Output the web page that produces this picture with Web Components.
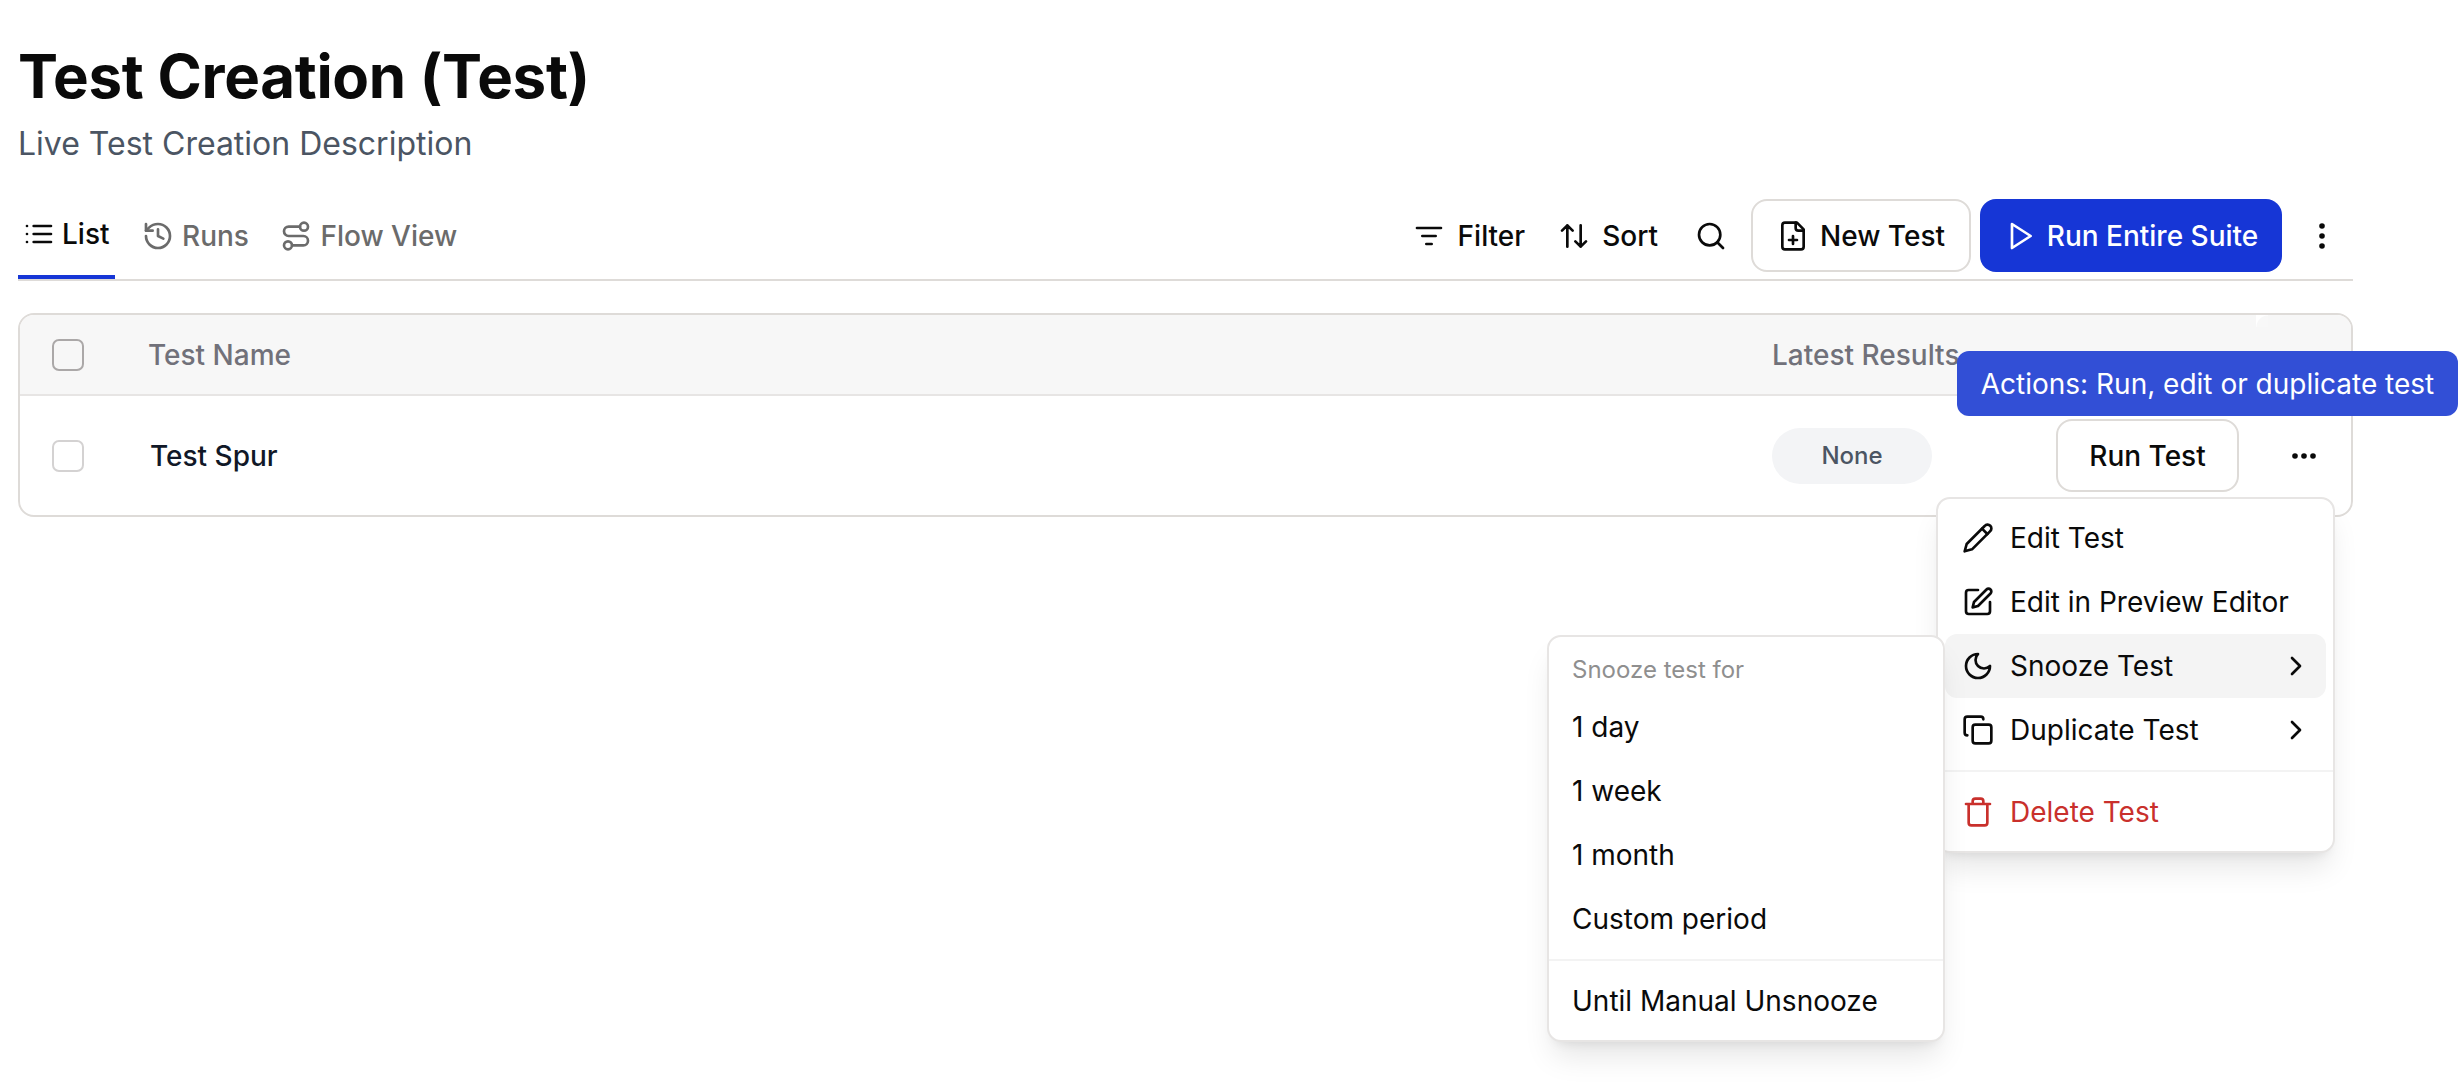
<!DOCTYPE html>
<html>
<head>
<meta charset="utf-8">
<style>
  html, body { margin: 0; padding: 0; background: #fff; overflow: hidden; }
  body { font-family: Inter, "Liberation Sans", sans-serif; color: #0a0a0a; height: 1082px; position: relative; }
</style>
</head>
<body>
<test-page></test-page>

<script>
const ICONS = {
  list: '<path d="M8 6h13M8 12h13M8 18h13M3 6h.01M3 12h.01M3 18h.01"/>',
  history: '<path d="M3 12a9 9 0 1 0 9-9 9.75 9.75 0 0 0-6.74 2.74L3 8"/><path d="M3 3v5h5"/><path d="M12 7v5l4 2"/>',
  route: '<circle cx="6" cy="19" r="3"/><path d="M9 19h8.5a3.5 3.5 0 0 0 0-7h-11a3.5 3.5 0 0 1 0-7H15"/><circle cx="18" cy="5" r="3"/>',
  filter: '<path d="M3 6h18M7 12h10M10 18h4"/>',
  sort: '<path d="m21 16-4 4-4-4M17 20V4M3 8l4-4 4 4M7 4v16"/>',
  search: '<circle cx="11" cy="11" r="8"/><path d="m21 21-4.3-4.3"/>',
  filePlus: '<path d="M15 2H6a2 2 0 0 0-2 2v16a2 2 0 0 0 2 2h12a2 2 0 0 0 2-2V7Z"/><path d="M14 2v4a2 2 0 0 0 2 2h4"/><path d="M9 15h6M12 18v-6"/>',
  play: '<polygon points="6 3 20 12 6 21 6 3"/>',
  pencil: '<path d="M17 3a2.85 2.83 0 1 1 4 4L7.5 20.5 2 22l1.5-5.5Z"/><path d="m15 5 4 4"/>',
  square: '<path d="M12 3H5a2 2 0 0 0-2 2v14a2 2 0 0 0 2 2h14a2 2 0 0 0 2-2v-7"/><path d="M18.375 2.625a2.121 2.121 0 1 1 3 3L12 15l-4 1 1-4Z"/>',
  moon: '<path d="M12 3a6 6 0 0 0 9 9 9 9 0 1 1-9-9Z"/>',
  copy: '<rect x="8" y="8" width="14" height="14" rx="2"/><path d="M4 16c-1.1 0-2-.9-2-2V4c0-1.1.9-2 2-2h10c1.1 0 2 .9 2 2"/>',
  chevron: '<path d="m9 18 6-6-6-6"/>',
  trash: '<path d="M3 6h18M19 6v14a2 2 0 0 1-2 2H7a2 2 0 0 1-2-2V6M8 6V4a2 2 0 0 1 2-2h4a2 2 0 0 1 2 2v2"/>'
};

class UiIcon extends HTMLElement {
  connectedCallback() {
    const size = this.getAttribute('size') || 32;
    const stroke = this.getAttribute('stroke') || 2;
    const root = this.attachShadow({mode: 'open'});
    root.innerHTML = `
      <style>:host { display: inline-flex; flex: none; } svg { display: block; }</style>
      <svg width="${size}" height="${size}" viewBox="0 0 24 24" fill="none" stroke="currentColor" stroke-width="${stroke}" stroke-linecap="round" stroke-linejoin="round">${ICONS[this.getAttribute('name')]}</svg>`;
  }
}
customElements.define('ui-icon', UiIcon);

class TabItem extends HTMLElement {
  constructor() {
    super();
    this.attachShadow({mode: 'open'}).innerHTML = `
      <style>
        :host { display: flex; align-items: center; gap: 8px; height: 79px; padding: 0 4px 8px 5px; box-sizing: border-box; color: #6b6b6b; font-size: 28px; font-weight: 500; }
        :host([active]) { color: #0a0a0a; gap: 7px; padding-right: 5px; border-bottom: 4px solid #1636d6; padding-bottom: 7px; }
      </style>
      <slot></slot>`;
  }
}
customElements.define('tab-item', TabItem);

class ToolButton extends HTMLElement {
  constructor() {
    super();
    this.attachShadow({mode: 'open'}).innerHTML = `
      <style>
        :host { display: inline-flex; align-items: center; justify-content: center; gap: 11px; height: 73px; box-sizing: border-box; border-radius: 16px; font-size: 28px; font-weight: 500; color: #0a0a0a; white-space: nowrap; }
        :host([outline]) { border: 2px solid #dedbd8; background: #fff; }
        :host([primary]) { background: #1636d6; color: #fff; }
      </style>
      <slot></slot>`;
  }
}
customElements.define('tool-button', ToolButton);

class MenuRow extends HTMLElement {
  constructor() {
    super();
    this.attachShadow({mode: 'open'}).innerHTML = `
      <style>
        :host { display: flex; align-items: center; gap: 16px; height: 64px; margin: 0 7px; padding: 0 14px 0 17px; border-radius: 12px; font-size: 28px; color: #0a0a0a; white-space: nowrap; }
        :host([hot]) { background: #f4f4f4; }
        :host([danger]) { color: #c9302c; }
        .end { margin-left: auto; display: flex; }
      </style>
      <slot></slot><span class="end"><slot name="end"></slot></span>`;
  }
}
customElements.define('menu-row', MenuRow);

class PopMenu extends HTMLElement {
  constructor() {
    super();
    this.attachShadow({mode: 'open'}).innerHTML = `
      <style>
        :host { display: block; position: absolute; box-sizing: border-box; background: #fff; border: 2px solid #e7e5e4; border-radius: 14px; padding: 7px 0 6px; box-shadow: 0 20px 30px -6px rgba(0,0,0,.1), 0 8px 12px -8px rgba(0,0,0,.1); }
        ::slotted(hr) { border: 0; border-top: 2px solid #f3f3f3; margin: 8px 0; }
      </style>
      <slot></slot>`;
  }
}
customElements.define('pop-menu', PopMenu);

class TestPage extends HTMLElement {
  constructor() {
    super();
    this.attachShadow({mode: 'open'}).innerHTML = `
      <style>
        :host { display: block; padding: 0 105px 0 18px; font-family: Inter, "Liberation Sans", sans-serif; }
        h1 { margin: 0; padding-top: 40px; font-size: 60px; line-height: 72px; font-weight: 700; letter-spacing: -0.3px; color: #0a0a0a; }
        .sub { margin: 0; padding-top: 12px; font-size: 32px; line-height: 40px; color: #4b5563; }
        .bar { display: flex; align-items: center; height: 79px; margin-top: 36px; border-bottom: 2px solid #dedbd8; }
        .tabs { display: flex; gap: 22.5px; align-self: stretch; }
        .tools { margin-left: auto; display: flex; align-items: center; padding-bottom: 8px; }
        .plain { display: flex; align-items: center; gap: 12px; font-size: 28px; font-weight: 500; }
        .more { width: 63px; padding-left: 8px; justify-content: center; }
        .table { margin-top: 32px; border: 2px solid #dedbd8; border-radius: 16px; overflow: hidden; height: 204px; box-sizing: border-box; }
        .head, .row { display: flex; align-items: center; }
        .head { height: 79px; background: #f7f7f7; border-bottom: 2px solid #e7e5e4; color: #71717a; font-size: 28px; font-weight: 500; }
        .row { height: 119px; color: #111827; font-size: 28px; font-weight: 500; }
        .check { width: 32px; height: 32px; box-sizing: border-box; margin-left: 32px; border-radius: 7px; border: 2px solid #d4d2d2; background: #fff; }
        .head .check { border-color: #aba8a8; background: #f7f7f7; }
        .name { margin-left: 64px; }
        .row .name { margin-left: 66px; }
        .latest { position: absolute; left: 1772px; }
        .corner { position: absolute; left: 2256px; top: 315px; width: 12px; height: 12px; background: radial-gradient(circle at 100% 100%, #f8f8f8 11px, #fff 12px); }
        .pill { position: absolute; left: 1772px; width: 160px; height: 56px; border-radius: 28px; background: #f3f4f6; color: #4b5563; font-size: 24px; display: flex; align-items: center; justify-content: center; }
        .run { position: absolute; left: 2056px; width: 183px; }
        .dots { position: absolute; left: 2287px; display: flex; }
        .tip { position: absolute; left: 1957px; top: 351px; width: 501px; height: 65px; box-sizing: border-box; border-radius: 12px; background: #324fd6; color: #fff; font-size: 28px; display: flex; align-items: center; justify-content: center; white-space: nowrap; }
        .caption { font-size: 24px; color: #8f8f8f; height: 51px; display: flex; align-items: center; padding: 0 23px; }
        .snooze menu-row { margin: 0; padding: 0 23px; }
      </style>
      <h1>Test Creation (Test)</h1>
      <p class="sub">Live Test Creation Description</p>
      <div class="bar">
        <div class="tabs">
          <tab-item active><ui-icon name="list"></ui-icon>List</tab-item>
          <tab-item><ui-icon name="history"></ui-icon>Runs</tab-item>
          <tab-item><ui-icon name="route"></ui-icon>Flow View</tab-item>
        </div>
        <div class="tools">
          <span class="plain" style="gap:13px"><ui-icon name="filter"></ui-icon>Filter</span>
          <span class="plain" style="margin-left:33px"><ui-icon name="sort"></ui-icon>Sort</span>
          <span class="plain" style="margin-left:37px"><ui-icon name="search"></ui-icon></span>
          <tool-button outline style="width:220px;margin-left:24px"><ui-icon name="filePlus"></ui-icon>New Test</tool-button>
          <tool-button primary style="width:302px;margin-left:9px"><ui-icon name="play"></ui-icon>Run Entire Suite</tool-button>
          <span class="plain more"><svg width="6" height="26" viewBox="0 0 6 26" fill="#0a0a0a"><circle cx="3" cy="3" r="2.8"/><circle cx="3" cy="13" r="2.8"/><circle cx="3" cy="23" r="2.8"/></svg></span>
        </div>
      </div>
      <div class="table">
        <div class="head">
          <span class="check"></span><span class="name">Test Name</span><span class="latest">Latest Results</span><span class="corner"></span>
        </div>
        <div class="row">
          <span class="check"></span><span class="name">Test Spur</span>
          <span class="pill">None</span>
          <tool-button outline class="run">Run Test</tool-button>
          <span class="dots"><svg width="34" height="8" viewBox="0 0 34 8" fill="#0a0a0a"><circle cx="8" cy="4" r="2.8"/><circle cx="17" cy="4" r="2.8"/><circle cx="26" cy="4" r="2.8"/></svg></span>
        </div>
      </div>
      <div class="tip">Actions: Run, edit or duplicate test</div>
      <pop-menu style="left:1936px;top:497px;width:399px;height:356px">
        <menu-row><ui-icon name="pencil"></ui-icon>Edit Test</menu-row>
        <menu-row><ui-icon name="square"></ui-icon>Edit in Preview Editor</menu-row>
        <menu-row hot><ui-icon name="moon"></ui-icon>Snooze Test<ui-icon slot="end" name="chevron"></ui-icon></menu-row>
        <menu-row><ui-icon name="copy"></ui-icon>Duplicate Test<ui-icon slot="end" name="chevron"></ui-icon></menu-row>
        <hr>
        <menu-row danger><ui-icon name="trash"></ui-icon>Delete Test</menu-row>
      </pop-menu>
      <pop-menu class="snooze" style="left:1547px;top:635px;width:398px;height:407px">
        <div class="caption">Snooze test for</div>
        <menu-row>1 day</menu-row>
        <menu-row>1 week</menu-row>
        <menu-row>1 month</menu-row>
        <menu-row>Custom period</menu-row>
        <hr>
        <menu-row>Until Manual Unsnooze</menu-row>
      </pop-menu>`;
  }
}
customElements.define('test-page', TestPage);
</script>
</body>
</html>
